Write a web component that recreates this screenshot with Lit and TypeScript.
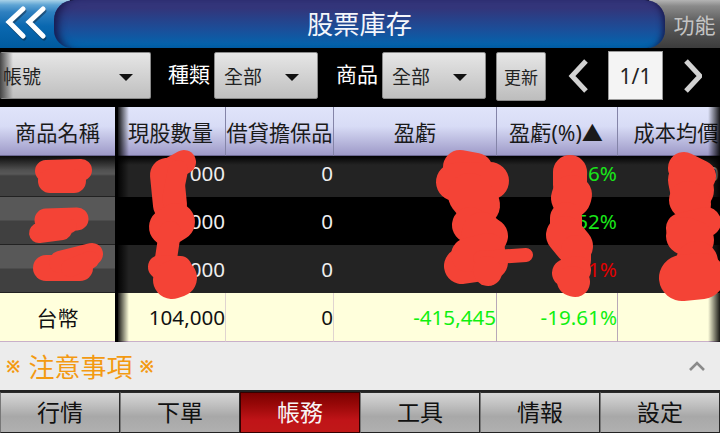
import { LitElement, html, css, svg } from "lit";
import { customElement } from "lit/decorators.js";

const rows = [
  { qty: "000", pawn: "0", pl: "", pct: "96%", pctCls: "up", cost: "0" },
  { qty: "000", pawn: "0", pl: "-300", pct: "52%", pctCls: "up", cost: "" },
  { qty: "000", pawn: "0", pl: "", pct: "1%", pctCls: "down", cost: "0" },
];

@customElement("app-root")
export class AppRoot extends LitElement {
  static styles = css`
    :host { display: block; width: 720px; height: 433px; background: #000; font-family: "Noto Sans", "Noto Sans CJK TC", sans-serif; }
    .page { position: relative; width: 720px; height: 433px; overflow: hidden; display: flex; flex-direction: column; }
    .header { flex: 0 0 48px; display: flex; }
    .back { flex: 0 0 70px; margin-right: -16px; display: flex; align-items: center; padding: 0 0 0 4px; box-sizing: border-box;
      background: linear-gradient(#a9d2e8 0, #5ea4d4 5px, #2f80c0 12px, #0a68b0 26px, #005a9e 48px); }
    .title { flex: 1; position: relative; display: flex; align-items: center; justify-content: center; color: #f4f6fb; font-size: 26.3px; line-height: 48px;
      padding-left: 0; border-radius: 20px 20px 18px 18px;
      background: linear-gradient(#33357a 0, #33357a 8px, #1a4f9a 30px, #0067b0 48px);
      box-shadow: inset 9px 0 8px -5px #17174a, inset -7px 0 6px -5px #17174a; }
    .func { flex: 0 0 71px; margin-left: -16px; padding-left: 20px; box-sizing: border-box; display: flex; align-items: center; justify-content: center;
      font-size: 21px; color: #c4c4c4; white-space: nowrap; background: linear-gradient(#b4b4b4 0, #8a8a8a 6px, #5e5e5e 22px, #3c3c3c 48px); }
    .title-wrap { flex: 1; display: flex; position: relative; z-index: 1; }

    .toolbar { flex: 0 0 59px; display: flex; align-items: flex-start; position: relative; padding-top: 4px; box-sizing: border-box; color: #fff; font-size: 21px; }
    .select { position: relative; height: 47px; box-sizing: border-box; display: flex; align-items: center; padding-left: 9px; font-size: 19px; color: #222;
      background: linear-gradient(#e6e6e6, #bfbfbf); border: 1px solid #8a8a8a; border-radius: 2px; }
    .select .caret { position: absolute; right: 18px; top: 21px; width: 0; height: 0; border-left: 7px solid transparent; border-right: 7px solid transparent; border-top: 7px solid #111; }
    .s0 { width: 151px; padding-left: 3px; margin-right: 17px; border-left: 0; }
    .s0::before { content: ""; position: absolute; left: 0; top: 0; bottom: 0; width: 13px; background: linear-gradient(90deg, #444, rgba(90,90,90,0)); }
    .s0 .caret { right: 17px; }
    .s0 .txt { position: relative; }
    .s1 { width: 104px; }
    .lab { height: 47px; line-height: 45px; margin-right: 4px; white-space: nowrap; }
    .gap { width: 18px; }
    .refresh { width: 50px; height: 49px; margin-left: 10px; box-sizing: border-box; display: flex; align-items: center; justify-content: center; font-size: 17px; color: #222;
      background: linear-gradient(#e6e6e6, #bdbdbd); border: 1px solid #8a8a8a; border-radius: 2px; }
    .pg-arrow { display: block; margin-top: 6px; }
    .pg-l { margin-left: 22px; margin-right: 20px; }
    .pg-r { margin-left: 19px; }
    .pager { width: 55px; height: 49px; margin-top: -1px; box-sizing: border-box; background: #f4f4f4; border: 1px solid #999; color: #222; font-size: 21px; display: flex; align-items: center; justify-content: center; }

    .table { flex: 0 0 235px; display: flex; position: relative; }
    .frozen { flex: 0 0 115px; display: flex; flex-direction: column; }
    .sep { flex: 0 0 3px; background: #000; }
    .scroll { flex: 1; display: flex; flex-direction: column; position: relative; }
    .scroll::before { content: ""; position: absolute; left: 0; top: 0; bottom: 0; width: 11px; background: linear-gradient(90deg, rgba(0,0,0,.9), rgba(0,0,0,0)); z-index: 2; }
    .scroll::after { content: ""; position: absolute; right: 0; top: 0; bottom: 0; width: 12px; background: linear-gradient(270deg, rgba(0,0,0,.9), rgba(0,0,0,0)); z-index: 2; }
    .r { display: grid; grid-template-columns: 108px 108px 163px 121px 102px; }
    .rh { flex: 0 0 49px; }
    .r1, .f1 { flex: 0 0 41px; }
    .r2, .f2, .r3, .f3 { flex: 0 0 48px; }
    .rt, .ft { flex: 0 0 49px; }
    .th { background: linear-gradient(#e0e4fa, #d8dcf6 40%, #9e9ac8 100%); border-right: 1px solid #8484a8; border-bottom: 1px solid #6e6a94; box-sizing: border-box;
      display: flex; align-items: center; justify-content: center; color: #1a1a1a; font-size: 21.2px; white-space: nowrap; overflow: hidden; }
    .th.nb { border-right: 0; }
    .th.first { padding-right: 2px; }
    .th.last { padding-left: 14px; }
    .td { display: flex; align-items: center; justify-content: flex-end; font-size: 20.6px; color: #eee; box-sizing: border-box; white-space: nowrap; overflow: hidden; padding-right: 1px; }
    .dark { background: #232323; }
    .black { background: #000; }
    .r1 { position: relative; }
    .r1 .td { padding-bottom: 8px; }
    .r1::before { content: ""; position: absolute; left: 0; right: 0; top: 0; height: 9px; background: linear-gradient(rgba(0,0,0,.95), rgba(0,0,0,0)); }
    .fname { background: linear-gradient(#585858 0, #585858 48%, #404040 52%, #404040 100%); border-bottom: 1px solid #222; box-sizing: border-box; }
    .f1 { background: linear-gradient(#0c0c0c 0, #505050 14px, #585858 18px, #404040 20px, #404040 100%); }
    .up { color: #19e619; }
    .down { color: #e00000; }
    .td.total { background: #ffffdc; color: #111; border-right: 1px solid #b8a8b8; border-bottom: 1px solid #c9b0c9; padding-right: 0; }
    .td.total.soft { border-right-color: #e0d4d0; }
    .td.total.up { color: #10f010; }
    .td.total.nb { border-right: 0; }
    .ftotal { background: #ffffdc; color: #111; font-size: 21px; display: flex; align-items: center; justify-content: center; border-bottom: 1px solid #c9b0c9; box-sizing: border-box; }

    .notice { flex: 0 0 48px; background: #ececec; display: flex; align-items: center; justify-content: space-between; padding: 0 14px 0 6px; color: #f39a12; font-size: 26px; box-sizing: border-box; }
    .nt { display: flex; align-items: center; gap: 7px; }
    .mark { font-size: 17px; line-height: 1; font-weight: 700; }
    .mark.l { margin-right: 1px; }
    .tabs { flex: 1; display: grid; grid-template-columns: repeat(6, 120px); background: #222; padding-top: 1px; box-sizing: border-box; border-top: 1px solid #222; }
    .tab { display: flex; align-items: center; justify-content: center; font-size: 23px; color: #111; box-sizing: border-box; padding-bottom: 3px; border: 1px solid #2a2a2a; border-left-color: #777; border-bottom: 1px solid #222;
      background: linear-gradient(#d6d6d6 0, #c0c0c0 30%, #a8a8a8 60%, #b0b0b0 100%); }
    .tab.on { background: linear-gradient(#7c0000 0, #980808 30%, #c01418 70%, #c01818 100%); color: #f8f4f4; border-color: #300; }
    .scribble { position: absolute; left: 0; top: 0; z-index: 5; pointer-events: none; }
    .scribble path { fill: none; stroke: #f44336; stroke-linecap: round; stroke-linejoin: round; }
  `;

  render() {
    return html`<div class="page">
      <div class="header">
        <div class="back">
          <svg width="46" height="36" viewBox="0 0 46 36">
            <path d="M19 3 L5 16 L19 30 M39 3 L25 16 L39 30" fill="none" stroke="#123" stroke-opacity=".45" stroke-width="5" stroke-linecap="round" transform="translate(1 2)"/>
            <path d="M19 3 L5 16 L19 30 M39 3 L25 16 L39 30" fill="none" stroke="#fff" stroke-width="5" stroke-linecap="round"/>
          </svg>
        </div>
        <div class="title-wrap"><div class="title">股票庫存</div></div>
        <div class="func">功能</div>
      </div>
      <div class="toolbar">
        <div class="select s0"><span class="txt">帳號</span><i class="caret"></i></div>
        <div class="lab">種類</div>
        <div class="select s1">全部<i class="caret"></i></div>
        <div class="gap"></div>
        <div class="lab">商品</div>
        <div class="select s1">全部<i class="caret"></i></div>
        <div class="refresh">更新</div>
        <svg class="pg-arrow pg-l" width="20" height="36" viewBox="0 0 20 36"><path d="M18 3 L4 18 L18 33" fill="none" stroke="#d2d2d2" stroke-width="5"/></svg>
        <div class="pager">1/1</div>
        <svg class="pg-arrow pg-r" width="20" height="36" viewBox="0 0 20 36"><path d="M4 3 L18 18 L4 33" fill="none" stroke="#d2d2d2" stroke-width="5"/></svg>
      </div>
      <div class="table">
        <div class="frozen">
          <div class="th rh nb">商品名稱</div>
          <div class="fname f1"></div>
          <div class="fname f2"></div>
          <div class="fname f3"></div>
          <div class="ftotal ft">台幣</div>
        </div>
        <div class="sep"></div>
        <div class="scroll">
          <div class="r rh">
            <div class="th first">現股數量</div>
            <div class="th">借貸擔保品</div>
            <div class="th">盈虧</div>
            <div class="th first">盈虧(%)▲</div>
            <div class="th nb last">成本均價</div>
          </div>
          ${rows.map((r, i) => html`<div class="r r${i + 1}">
            <div class="td ${i === 1 ? "black" : "dark"}">${r.qty}</div>
            <div class="td ${i === 1 ? "black" : "dark"}">${r.pawn}</div>
            <div class="td ${i === 1 ? "black" : "dark"} up">${r.pl}</div>
            <div class="td ${i === 1 ? "black" : "dark"} ${r.pctCls}">${r.pct}</div>
            <div class="td ${i === 1 ? "black" : "dark"}">${r.cost}</div>
          </div>`)}
          <div class="r rt">
            <div class="td total soft">104,000</div>
            <div class="td total soft">0</div>
            <div class="td total up">-415,445</div>
            <div class="td total up">-19.61%</div>
            <div class="td total nb"></div>
          </div>
        </div>
      </div>
      <div class="notice">
        <span class="nt"><span class="mark l">※</span><span>注意事項</span><span class="mark">※</span></span>
        <svg width="18" height="12" viewBox="0 0 18 12"><path d="M2 10 L9 3 L16 10" fill="none" stroke="#8a8a8a" stroke-width="2.6"/></svg>
      </div>
      <div class="tabs">
        ${["行情", "下單", "帳務", "工具", "情報", "設定"].map((t, i) => html`<div class="tab ${i === 2 ? "on" : ""}">${t}</div>`)}
      </div>
      <svg class="scribble" width="720" height="433" viewBox="0 0 720 433">
        ${svg`
        <path stroke-width="22" d="M46 171 L81 170"/><path stroke-width="24" d="M50 181 L74 181"/>
        <path stroke-width="23" d="M46 220 L77 219"/><path stroke-width="20" d="M39 233 L62 230"/><path stroke-width="14" d="M42 226 L70 226"/>
        <path stroke-width="26" d="M46 268 L80 268"/><path stroke-width="22" d="M60 262 L92 254"/><path stroke-width="18" d="M70 268 L90 260"/>
        <path stroke-width="24" d="M184 162 L166 172"/><path stroke-width="34" d="M167 175 L170 205"/><path stroke-width="20" d="M178 170 L172 200"/>
        <path stroke-width="38" d="M168 227 L176 222"/><path stroke-width="22" d="M170 232 L165 265"/>
        <path stroke-width="24" d="M160 267 L180 268"/><path stroke-width="38" d="M172 280 L178 278"/>
        <path stroke-width="34" d="M460 167 L476 170"/><path stroke-width="38" d="M455 182 L490 181"/>
        <path stroke-width="44" d="M470 195 L478 205"/><path stroke-width="36" d="M470 225 L490 236"/>
        <path stroke-width="40" d="M482 232 L478 258"/><path stroke-width="36" d="M462 266 L490 262"/><path stroke-width="34" d="M468 255 L488 250"/>
        <path stroke-width="14" d="M480 258 L526 255"/><path stroke-width="28" d="M487 270 L488 272"/>
        <path stroke-width="34" d="M570 172 L570 185"/><path stroke-width="40" d="M572 195 L571 198"/>
        <path stroke-width="32" d="M566 218 L566 226"/><path stroke-width="38" d="M565 235 L574 246"/>
        <path stroke-width="30" d="M576 250 L576 260"/><path stroke-width="28" d="M566 273 L577 270"/><path stroke-width="30" d="M572 281 L575 282"/>
        <path stroke-width="32" d="M684 168 L700 176"/><path stroke-width="44" d="M690 180 L692 190"/>
        <path stroke-width="38" d="M688 200 L692 204"/><path stroke-width="30" d="M681 228 L706 222"/>
        <path stroke-width="38" d="M685 236 L695 240"/><path stroke-width="42" d="M697 262 L692 272"/>
        <path stroke-width="46" d="M682 278 L702 276"/>
        `}
      </svg>
    </div>`;
  }
}
